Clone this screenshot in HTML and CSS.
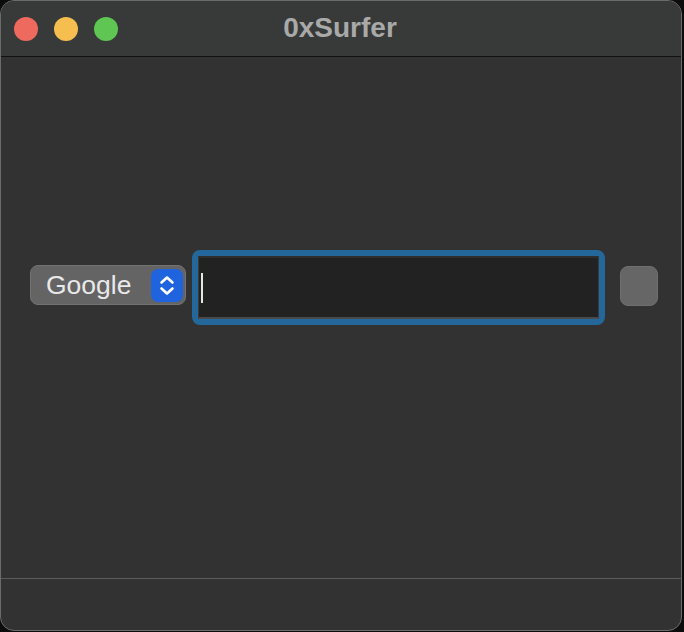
FILE: index.html
```html
<!DOCTYPE html>
<html>
<head>
<meta charset="utf-8">
<link rel="stylesheet" href="styles.css">
</head>
<body>
<div class="window">
  <div class="titlebar">
    <div class="lights">
      <span class="light red"></span>
      <span class="light yellow"></span>
      <span class="light green"></span>
    </div>
    <div class="title">0xSurfer</div>
  </div>
  <div class="main">
    <div class="row">
      <div class="popup">
        <span class="popup-label">Google</span>
        <span class="stepper">
          <svg width="32" height="33" viewBox="0 0 32 33">
            <path d="M10.5 13.5 L16 8.5 L21.5 13.5" fill="none" stroke="#fff" stroke-width="2.6" stroke-linecap="round" stroke-linejoin="round"/>
            <path d="M10.5 19.5 L16 24.5 L21.5 19.5" fill="none" stroke="#fff" stroke-width="2.6" stroke-linecap="round" stroke-linejoin="round"/>
          </svg>
        </span>
      </div>
      <div class="field-ring">
        <div class="field"><span class="caret"></span></div>
      </div>
      <div class="square-btn"></div>
    </div>
  </div>
  <div class="footer"></div>
</div>
</body>
</html>
```
FILE: styles.css
```css
html, body {
  margin: 0;
  padding: 0;
  background: #0c0c0c;
  width: 684px;
  height: 632px;
  overflow: hidden;
}
.window {
  width: 682px;
  height: 631px;
  box-sizing: border-box;
  border: 1px solid #6b6b6b;
  border-radius: 14px;
  background: #323232;
  overflow: hidden;
  display: flex;
  flex-direction: column;
  font-family: "Liberation Sans", Arial, sans-serif;
}
.titlebar {
  height: 55px;
  flex: none;
  background: #383a39;
  border-bottom: 1px solid #111;
  display: flex;
  align-items: center;
  position: relative;
}
.lights {
  display: flex;
  gap: 16px;
  padding-left: 13px;
  padding-top: 1px;
}
.light {
  width: 24px;
  height: 24px;
  border-radius: 50%;
  display: block;
}
.red { background: #ee6a5e; }
.yellow { background: #f5be4f; }
.green { background: #5fc553; }
.title {
  position: absolute;
  left: 0;
  right: 0;
  top: 12px;
  text-align: center;
  font-weight: bold;
  font-size: 28px;
  color: #a9a9a9;
  line-height: 30px;
  padding-right: 2px;
}
.main {
  flex: 1;
  padding-top: 193px;
  border-bottom: 1px solid #5c5c5c;
}
.row {
  display: flex;
  align-items: center;
  padding-left: 29px;
}
.popup {
  width: 156px;
  height: 40px;
  box-sizing: border-box;
  background: #646464;
  border: 1px solid #727272;
  border-radius: 8px;
  display: flex;
  align-items: center;
  justify-content: space-between;
  padding-left: 15px;
  padding-right: 2px;
  margin-top: -5px;
}
.popup-label {
  font-family: "Liberation Sans", Arial, sans-serif;
  font-size: 26.5px;
  color: #e9e9e9;
}
.stepper {
  width: 32px;
  height: 33px;
  border-radius: 7px;
  background: #1f63df;
  display: block;
}
.stepper svg { display: block; }
.field-ring {
  margin-left: 6px;
  width: 413px;
  height: 75px;
  box-sizing: border-box;
  border: 6px solid #24689b;
  border-radius: 8px;
  background: #24689b;
}
.field {
  height: 100%;
  box-sizing: border-box;
  background: #222;
  border: 1px solid #3b3b3b;
  border-top: 2px solid #2e2e2e;
  border-bottom: 2px solid #4a4a4a;
  display: flex;
  align-items: center;
  padding-left: 2px;
}
.caret {
  width: 2px;
  height: 30px;
  background: #e6e6e6;
  display: block;
}
.square-btn {
  margin-left: 15px;
  width: 38px;
  height: 40px;
  box-sizing: border-box;
  background: #666;
  border: 1px solid #6f6f6f;
  border-radius: 8px;
  margin-top: -3px;
}
.footer {
  height: 51px;
  flex: none;
}
```
